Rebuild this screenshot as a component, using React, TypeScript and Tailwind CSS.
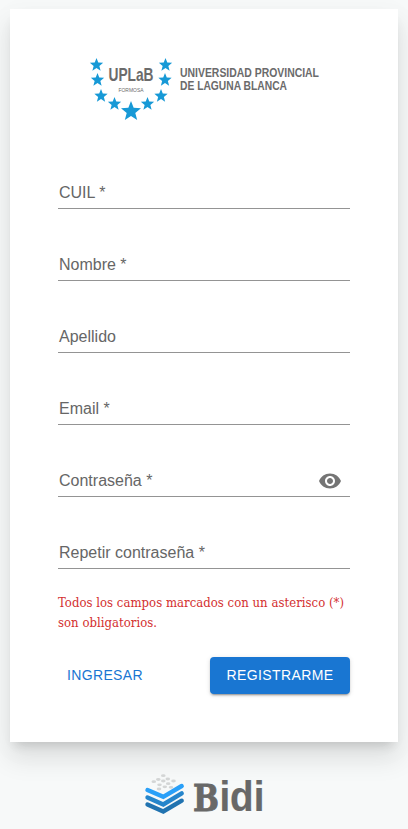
import { MdVisibility } from 'react-icons/md';

const FIELDS = [
  { id: 'cuil', label: 'CUIL *' },
  { id: 'nombre', label: 'Nombre *' },
  { id: 'apellido', label: 'Apellido' },
  { id: 'email', label: 'Email *' },
  { id: 'password', label: 'Contraseña *', secret: true },
  { id: 'repeat', label: 'Repetir contraseña *' },
];

// Centre and outer radius of each star around the wordmark
const STARS = [
  [12.5, 15, 7],
  [13.5, 30, 7],
  [17, 46, 7],
  [30.5, 54, 7],
  [47, 61.5, 10.5],
  [63.5, 54, 7],
  [77, 46, 7],
  [81, 30, 7],
  [81.5, 15, 7],
];

const DOTS = [
  [20.3, 5.7],
  [24.8, 9],
  [15.3, 9.5],
  [30.5, 11],
  [20.3, 11],
  [10.8, 11.7],
  [25.2, 13.7],
  [16.5, 14.8],
  [28, 17.3],
  [21.8, 16.8],
  [16, 19],
];

function starPoints(cx: number, cy: number, r: number) {
  return Array.from({ length: 10 }, (_, i) => {
    const radius = i % 2 === 0 ? r : r * 0.43;
    const angle = (Math.PI / 5) * i - Math.PI / 2;
    return `${cx + radius * Math.cos(angle)},${cy + radius * Math.sin(angle)}`;
  }).join(' ');
}

function UniversityLogo() {
  return (
    <svg
      viewBox="0 0 240 75"
      className="h-[75px] w-[240px] overflow-visible font-['Liberation_Sans_Narrow','Liberation_Sans',sans-serif]"
    >
      {STARS.map(([cx, cy, r]) => (
        <polygon key={`${cx}-${cy}`} points={starPoints(cx, cy, r)} fill="#1799d6" />
      ))}
      <g fill="#6b6b6b" fontWeight="700">
        <text x="24.5" y="31" fontSize="18.5" textLength="45" lengthAdjust="spacingAndGlyphs">UPLaB</text>
        <text x="34.5" y="41.7" fontSize="6" fontWeight="400" textLength="25" lengthAdjust="spacingAndGlyphs">FORMOSA</text>
        <text x="96" y="26.6" fontSize="13" textLength="139" lengthAdjust="spacingAndGlyphs">UNIVERSIDAD PROVINCIAL</text>
        <text x="96" y="39.7" fontSize="13" textLength="107" lengthAdjust="spacingAndGlyphs">DE LAGUNA BLANCA</text>
      </g>
    </svg>
  );
}

function BidiLogo() {
  return (
    <svg viewBox="0 0 122 50" className="h-[50px] w-[122px] overflow-visible">
      {DOTS.map(([cx, cy]) => (
        <ellipse key={`${cx}-${cy}`} cx={cx} cy={cy} rx="2.3" ry="1.4" fill="#d3d5d5" />
      ))}
      <g fill="none" strokeWidth="4.4" strokeLinecap="round">
        <path d="M4.5 34.5 20.3 41.5 38.7 30.7" stroke="#2173b0" />
        <path d="M4.5 27.5 20.3 34.5 38.7 23.3" stroke="#2585cb" />
        <path d="M4.5 20 20.3 26.8 38.7 16" stroke="#2aa0f8" />
      </g>
      <g fill="#686868" stroke="#686868" fontWeight="700">
        <text x="50" y="40.5" fontSize="37.5" strokeWidth="0.9" textLength="26" lengthAdjust="spacingAndGlyphs" fontFamily="DejaVu Serif, serif">B</text>
        <text x="76.4" y="40.7" fontSize="42" strokeWidth="0.2" textLength="45" lengthAdjust="spacingAndGlyphs" fontFamily="Liberation Sans, sans-serif">idi</text>
      </g>
    </svg>
  );
}

export default function App() {
  return (
    <div className="flex h-[829px] flex-col items-center overflow-hidden bg-[#f7f9f9] pt-[9px] font-['Liberation_Sans',sans-serif]">
      <main className="flex h-[733px] w-[388px] shrink-0 flex-col bg-white px-12 pt-[41px] shadow-[0px_8px_10px_-5px_rgba(0,0,0,0.14),0px_16px_24px_2px_rgba(0,0,0,0.09),0px_6px_30px_5px_rgba(0,0,0,0.02)]">
        <div className="flex h-[75px] justify-center">
          <UniversityLogo />
        </div>

        <form className="mt-9 flex flex-col">
          <div className="flex flex-col gap-6">
            {FIELDS.map(({ id, label, secret }) => (
              <div key={id} className="flex h-12 items-end justify-between border-b border-[#949494] pb-[3px]">
                <label htmlFor={id} className="pl-px text-base leading-6 text-[#666]">{label}</label>
                {secret && (
                  <button type="button" aria-label="Mostrar contraseña" className="mr-2 text-[#757575]">
                    <MdVisibility className="size-6" />
                  </button>
                )}
              </div>
            ))}
          </div>

          <p className="mt-6 font-['DejaVu_Serif_Condensed','DejaVu_Serif',serif] text-[13px] leading-5 tracking-[0.03px] whitespace-nowrap text-[#d32f2f]">
            Todos los campos marcados con un asterisco (*)
            <br />
            son obligatorios.
          </p>

          <div className="mt-6 flex items-start justify-between">
            <button type="button" className="pt-[6px] pl-[9px] text-[14px] leading-6 tracking-[0.35px] text-[#1976d2]">INGRESAR</button>
            <button
              type="button"
              className="h-[37px] w-[140px] rounded-[4px] bg-[#1976d2] text-[14px] tracking-[0.4px] text-white shadow-[0px_3px_1px_-2px_rgba(0,0,0,0.2),0px_2px_2px_0px_rgba(0,0,0,0.14),0px_1px_5px_0px_rgba(0,0,0,0.12)]"
            >
              REGISTRARME
            </button>
          </div>
        </form>
      </main>

      <footer className="mt-[28px] flex">
        <BidiLogo />
      </footer>
    </div>
  );
}
